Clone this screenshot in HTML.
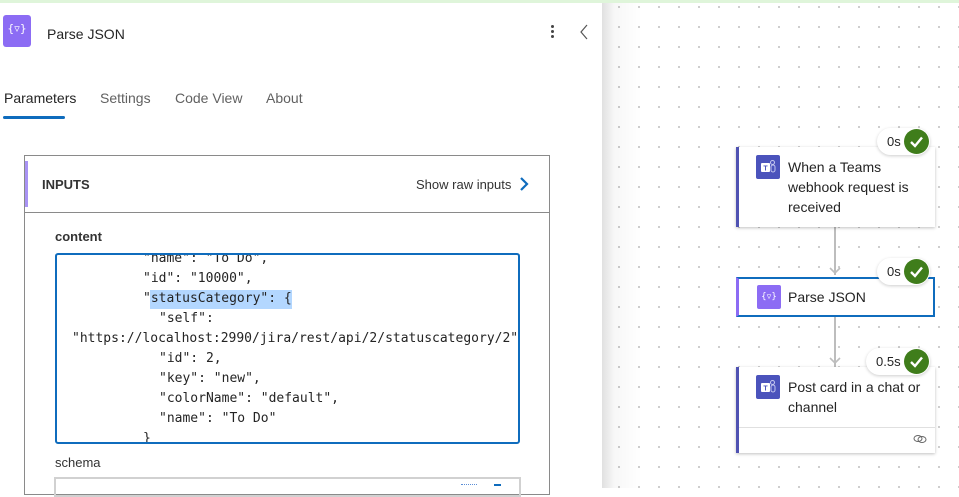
<!DOCTYPE html>
<html><head><meta charset="utf-8"><style>
*{margin:0;padding:0;box-sizing:border-box}
body{width:959px;height:488px;overflow:hidden;position:relative;font-family:"Liberation Sans",sans-serif;color:#242424;background:#fff}
.canvas{position:absolute;left:602px;top:0;width:357px;height:488px;background-color:#fff;background-image:radial-gradient(#bdbdbd 0.8px,transparent 1px);background-size:20px 20px;background-position:7px -3px}
.shadow{position:absolute;left:602px;top:0;width:40px;height:488px;background:linear-gradient(to right,rgba(0,0,0,0.12),rgba(0,0,0,0.03) 30%,rgba(0,0,0,0))}
.top{position:absolute;left:0;top:0;width:959px;height:3px;background:#dff5da}
.panel{position:absolute;left:0;top:3px;width:602px;height:485px;background:#fff}
.abs{position:absolute}
.code{position:absolute;font-family:"DejaVu Sans Mono",monospace;font-size:13px;color:#242424;white-space:pre;line-height:20px}
.card{position:absolute;left:736px;width:199px;background:#fff;box-shadow:0 1px 3px rgba(0,0,0,0.25);border-left:3px solid #4f52b2}
.badge{position:absolute;height:27px;background:#fff;border-radius:14px;box-shadow:0 1px 3px rgba(0,0,0,0.2);font-size:13px;line-height:27px;padding-left:10px}
.chk{position:absolute;right:1px;top:1px;width:25px;height:25px;border-radius:50%;background:#3f7d1b}
.ct{position:absolute;font-size:14px;line-height:20px;color:#242424}
</style></head><body>
<div class="canvas"></div>
<div class="shadow"></div>
<div class="top"></div>
<div class="panel"></div>

<div class="abs" style="left:3px;top:15px;width:28px;height:32px;background:#8c6cf4;border-radius:3px"></div>
<div class="abs" style="left:3px;top:22px;width:28px;font-size:11px;color:#fff;text-align:center;font-family:'DejaVu Sans',sans-serif">{▿}</div>
<div class="abs" style="left:47px;top:26px;font-size:14px">Parse JSON</div>
<div class="abs" style="left:551px;top:25px;width:3px;height:3px;background:#444;border-radius:50%;box-shadow:0 5px 0 #444,0 10px 0 #444"></div>
<svg class="abs" style="left:578px;top:23px" width="12" height="18"><path d="M9 2 L3 9 L9 16" fill="none" stroke="#555" stroke-width="1.2"/></svg>

<div class="abs" style="left:4px;top:90px;font-size:14px;color:#242424">Parameters</div>
<div class="abs" style="left:100px;top:90px;font-size:14px;color:#616161">Settings</div>
<div class="abs" style="left:175px;top:90px;font-size:14px;color:#616161">Code View</div>
<div class="abs" style="left:266px;top:90px;font-size:14px;color:#616161">About</div>
<div class="abs" style="left:3px;top:116px;width:62px;height:3px;background:#0f6cbd;border-radius:2px"></div>

<div class="abs" style="left:24px;top:155px;width:526px;height:340px;border:1px solid #8a8a8a"></div>
<div class="abs" style="left:25px;top:212px;width:524px;height:1px;background:#8a8a8a"></div>
<div class="abs" style="left:25px;top:161px;width:3px;height:46px;background:#a993f4"></div>
<div class="abs" style="left:42px;top:177px;font-size:13px;font-weight:bold;color:#333">INPUTS</div>
<div class="abs" style="left:416px;top:177px;font-size:13px;color:#333">Show raw inputs</div>
<svg class="abs" style="left:518px;top:176px" width="12" height="16"><path d="M3 2 L9 8 L3 14" fill="none" stroke="#0f6cbd" stroke-width="2.2"/></svg>
<div class="abs" style="left:55px;top:229px;font-size:13px;font-weight:bold;color:#333">content</div>

<div class="abs" style="left:55px;top:253px;width:465px;height:191px;border:2px solid #0f6cbd;border-radius:3px;overflow:hidden;background:#fff">
<div class="abs" style="left:93px;top:35px;width:142px;height:19px;background:#b3d7ff"></div>
<div class="code" style="left:86px;top:-6px">"name": "To Do",</div>
<div class="code" style="left:86px;top:14px">"id": "10000",</div>
<div class="code" style="left:86px;top:34px">"statusCategory": {</div>
<div class="code" style="left:102px;top:54px">"self":</div>
<div class="code" style="left:15px;top:74px">"https://localhost:2990/jira/rest/api/2/statuscategory/2"</div>
<div class="code" style="left:102px;top:94px">"id": 2,</div>
<div class="code" style="left:102px;top:114px">"key": "new",</div>
<div class="code" style="left:102px;top:134px">"colorName": "default",</div>
<div class="code" style="left:102px;top:154px">"name": "To Do"</div>
<div class="code" style="left:86px;top:174px">}</div>
</div>
<div class="abs" style="left:55px;top:455px;font-size:13px;color:#333">schema</div>
<div class="abs" style="left:54px;top:477px;width:467px;height:20px;border:2px solid #d1d1d1"></div>
<div class="abs" style="left:461px;top:484px;width:16px;height:1px;border-top:1px dotted #5b8ed6"></div>
<div class="abs" style="left:494px;top:484px;width:7px;height:2px;background:#0f6cbd"></div>

<div class="abs" style="left:834px;top:227px;width:2px;height:48px;background:#bdbdbd"></div>
<svg class="abs" style="left:828px;top:264px" width="14" height="12"><path d="M2 4 L7 9 L12 4" fill="none" stroke="#bdbdbd" stroke-width="1.6"/></svg>
<div class="abs" style="left:834px;top:316px;width:2px;height:51px;background:#bdbdbd"></div>
<svg class="abs" style="left:828px;top:354px" width="14" height="12"><path d="M2 4 L7 9 L12 4" fill="none" stroke="#bdbdbd" stroke-width="1.6"/></svg>

<div class="card" style="top:147px;height:80px"></div>
<svg class="abs" style="left:756px;top:155px" width="24" height="24"><rect width="24" height="24" rx="2" fill="#4b53bc"/><rect x="5" y="8" width="9" height="9" rx="1" fill="#fff"/><text x="9.5" y="15.5" font-size="7" font-family="Liberation Sans" font-weight="bold" fill="#4b53bc" text-anchor="middle">T</text><circle cx="16.5" cy="7.5" r="2" fill="none" stroke="#c5c8f0"/><rect x="15" y="10" width="4" height="7" rx="2" fill="none" stroke="#c5c8f0"/></svg>
<div class="ct" style="left:788px;top:157px">When a Teams<br>webhook request is<br>received</div>
<div class="badge" style="left:877px;top:128px;width:53px">0s<div class="chk"><svg width="25" height="25"><path d="M7 13 L11 17 L18 8.5" fill="none" stroke="#fff" stroke-width="2.4"/></svg></div></div>

<div class="card" style="top:277px;height:40px;border-left-color:#8c6cf4;box-shadow:none;border-top:2px solid #0f6cbd;border-right:2px solid #0f6cbd;border-bottom:2px solid #0f6cbd"></div>
<div class="abs" style="left:757px;top:285px;width:24px;height:24px;background:#8c6cf4;border-radius:2px;color:#fff;font-size:9px;text-align:center;line-height:24px;font-family:'DejaVu Sans',sans-serif">{▿}</div>
<div class="ct" style="left:788px;top:287px">Parse JSON</div>
<div class="badge" style="left:877px;top:258px;width:53px">0s<div class="chk"><svg width="25" height="25"><path d="M7 13 L11 17 L18 8.5" fill="none" stroke="#fff" stroke-width="2.4"/></svg></div></div>

<div class="card" style="top:367px;height:86px"></div>
<div class="abs" style="left:739px;top:427px;width:196px;height:1px;background:#e0e0e0"></div>
<svg class="abs" style="left:756px;top:375px" width="24" height="24"><rect width="24" height="24" rx="2" fill="#4b53bc"/><rect x="5" y="8" width="9" height="9" rx="1" fill="#fff"/><text x="9.5" y="15.5" font-size="7" font-family="Liberation Sans" font-weight="bold" fill="#4b53bc" text-anchor="middle">T</text><circle cx="16.5" cy="7.5" r="2" fill="none" stroke="#c5c8f0"/><rect x="15" y="10" width="4" height="7" rx="2" fill="none" stroke="#c5c8f0"/></svg>
<div class="ct" style="left:788px;top:377px">Post card in a chat or<br>channel</div>
<svg class="abs" style="left:913px;top:434px" width="14" height="10"><ellipse cx="5" cy="4.5" rx="4" ry="3" fill="none" stroke="#666" stroke-width="1"/><ellipse cx="9" cy="5.5" rx="4" ry="3" fill="none" stroke="#666" stroke-width="1"/></svg>
<div class="badge" style="left:866px;top:348px;width:64px">0.5s<div class="chk"><svg width="25" height="25"><path d="M7 13 L11 17 L18 8.5" fill="none" stroke="#fff" stroke-width="2.4"/></svg></div></div>
</body></html>
